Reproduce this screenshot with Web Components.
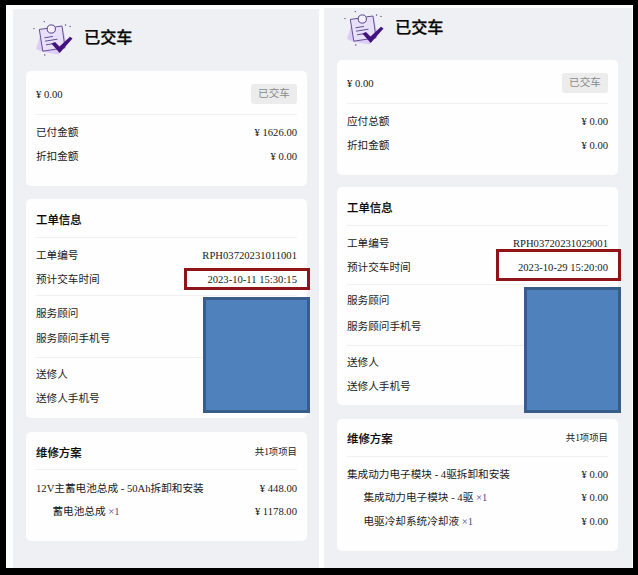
<!DOCTYPE html>
<html lang="zh-CN">
<head>
<meta charset="utf-8">
<title>已交车</title>
<style>
html,body{margin:0;background:#000}
body{width:638px;height:575px;overflow:hidden;font:10.63px/16px "Liberation Serif","Noto Sans CJK SC",serif;color:#191919}
</style>
</head>
<body>
<order-compare></order-compare>
<script>
function define(name, html) {
  const t = document.createElement('template');
  t.innerHTML = html;
  customElements.define(name, class extends HTMLElement {
    constructor() {
      super();
      this.attachShadow({ mode: 'open' }).append(t.content.cloneNode(true));
    }
  });
}

define('order-icon', `
<style>:host{display:block;width:42px;height:38px;margin-top:-.7px}svg{display:block;overflow:visible}</style>
<svg width="42" height="38" viewBox="0 0 42 38" fill="none">
  <path d="M7 16 L3 29 L10 32 L26 34.500 L33 21 L30 8Z" fill="#dccdf5"/>
  <path d="M6.300 9.400 L29 6 L32 27.800 L9.800 31.200 Z" fill="#e8dffa"/>
  <path d="M14 8.400 L6.300 9.400 L9.800 31.200 L32 27.800 L29 6 L22.500 6.900" stroke="#55408c" stroke-width=".9"/>
  <circle cx="18.300" cy="9" r="4.100" fill="#f3f0fb" stroke="#55408c" stroke-width="1"/>
  <path d="M11.500 17.800 L20 16.400 M12 21.200 L24.500 19.200 M13 24.800 L19 23.900" stroke="#55408c" stroke-width=".9"/>
  <path d="M18.300 23.400 L22 22 L26.500 26.400 L37 16.800 L39.500 18.500 L26.700 33Z" fill="#43127f"/>
  <g fill="#55408c"><circle cx="11.300" cy="1.600" r=".7"/><circle cx="1" cy="8.600" r=".7"/><circle cx="32.500" cy="5" r=".7"/><circle cx="37" cy="6.400" r=".7"/><circle cx="11.800" cy="35" r=".7"/></g>
</svg>`);

define('order-header', `
<style>
:host{display:flex;align-items:flex-start;height:var(--head,62px);box-sizing:border-box;padding-left:20px}
h1{margin:3px 0 0 9px;font:500 16.200px/24px "Noto Sans CJK SC",sans-serif;color:#080808;-webkit-text-stroke:.25px #080808}
</style><order-icon></order-icon><h1><slot></slot></h1>`);

define('order-card', `
<style>
:host{display:flex;flex-direction:column;box-sizing:border-box;width:281px;margin-left:13px;padding:0 10px;background:#fefefe;border-radius:5px}
</style><slot></slot>`);

define('order-row', `
<style>
:host{display:flex;justify-content:space-between;align-items:center;height:16px;flex:none;white-space:nowrap}
:host([indent]){padding-left:16.500px}
:host([total]){height:20px;margin-top:13px}
:host([total]) .label{padding-top:2px}
:host([title]) .label{font:500 11.400px/16px "Noto Sans CJK SC",sans-serif;color:#080808;-webkit-text-stroke:.15px #080808}
:host([title]) .value{font-size:9.400px}
</style><span class="label"><slot></slot></span><span class="value"><slot name="value"></slot></span>`);

define('order-rule', `<style>:host{display:block;flex:none;height:1px;background:#f0f0f1}</style>`);

define('order-badge', `
<style>:host{display:block;width:46px;height:20px;border-radius:3px;background:#ececec;color:#8b8b8b;text-align:center;line-height:20px}</style><slot></slot>`);

define('order-qty', `<style>:host{color:#4b4a94}</style><slot></slot>`);

define('order-panel', `
<style>:host{display:block;box-sizing:border-box;height:100%;background:#eff0f4}</style><slot></slot>`);

define('mark-box', `
<style>
:host{position:absolute;box-sizing:border-box;border:3px solid #8e1419}
:host([cover]){background:#4f81bd;border-color:#385d8a}
</style>`);

const g = n => `style="margin-top:${n}px"`;
const card = (top, height, body) => `<order-card style="margin-top:${top}px;height:${height}px">${body}</order-card>`;
const row = (top, label, value = '', attr = '') =>
  `<order-row ${attr} ${g(top)}><span>${label}</span>${value && `<span slot="value">${value}</span>`}</order-row>`;
const rule = top => `<order-rule ${g(top)}></order-rule>`;
const total = '<order-row total><span>¥ 0.00</span><order-badge slot="value">已交车</order-badge></order-row>';

define('order-compare', `
<style>
:host{display:grid;grid-template-columns:306px 308px;column-gap:5px;position:relative;box-sizing:border-box;width:627px;height:563px;margin:5px 0 0 6px;padding:4px 1px 0 7px;background:#fefefe}
order-panel{height:559px}
order-panel + order-panel{margin-top:-1px;height:560px}
order-header{padding-top:12px}
order-panel + order-panel order-header{--head:52px;padding-top:2.500px}
mark-box{left:var(--x);top:var(--y);width:var(--w);height:var(--h)}
</style>
<order-panel>
  <order-header>已交车</order-header>
  ${card(0, 115,
    total + rule(10) + row(10, '已付金额', '¥ 1626.00') + row(8, '折扣金额', '¥ 0.00'))}
  ${card(13, 219,
    row(12, '工单信息', '', 'title') + rule(10) +
    row(10, '工单编号', 'RPH03720231011001') + row(8, '预计交车时间', '2023-10-11 15:30:15') + rule(7) +
    row(10, '服务顾问') + row(9, '服务顾问手机号') + rule(10) +
    row(9, '送修人') + row(8, '送修人手机号'))}
  ${card(14, 109,
    row(12, '维修方案', '共1项项目', 'title') + rule(9) +
    row(11, '12V主蓄电池总成 - 50Ah拆卸和安装', '¥ 448.00') +
    row(7, '蓄电池总成 <order-qty>×1</order-qty>', '¥ 1178.00', 'indent'))}
</order-panel>
<order-panel>
  <order-header>已交车</order-header>
  ${card(0, 115,
    total + rule(9.5) + row(10.5, '应付总额', '¥ 0.00') + row(8, '折扣金额', '¥ 0.00'))}
  ${card(12, 218,
    row(12, '工单信息', '', 'title') + rule(10) +
    row(10, '工单编号', 'RPH03720231029001') + row(8, '预计交车时间', '2023-10-29 15:20:00') + rule(8) +
    row(8, '服务顾问') + row(10, '服务顾问手机号') + rule(10) +
    row(9, '送修人') + row(8, '送修人手机号'))}
  ${card(13.5, 132,
    row(11.5, '维修方案', '共1项项目', 'title') + rule(10) +
    row(10, '集成动力电子模块 - 4驱拆卸和安装', '¥ 0.00') +
    row(7, '集成动力电子模块 - 4驱 <order-qty>×1</order-qty>', '¥ 0.00', 'indent') +
    row(8, '电驱冷却系统冷却液 <order-qty>×1</order-qty>', '¥ 0.00', 'indent'))}
</order-panel>
<mark-box style="--x:178px;--y:263px;--w:126px;--h:22px"></mark-box>
<mark-box style="--x:490px;--y:244px;--w:125px;--h:32px"></mark-box>
<mark-box cover style="--x:197px;--y:292px;--w:107px;--h:116px"></mark-box>
<mark-box cover style="--x:518px;--y:282px;--w:97px;--h:126px"></mark-box>`);
</script>
</body>
</html>
